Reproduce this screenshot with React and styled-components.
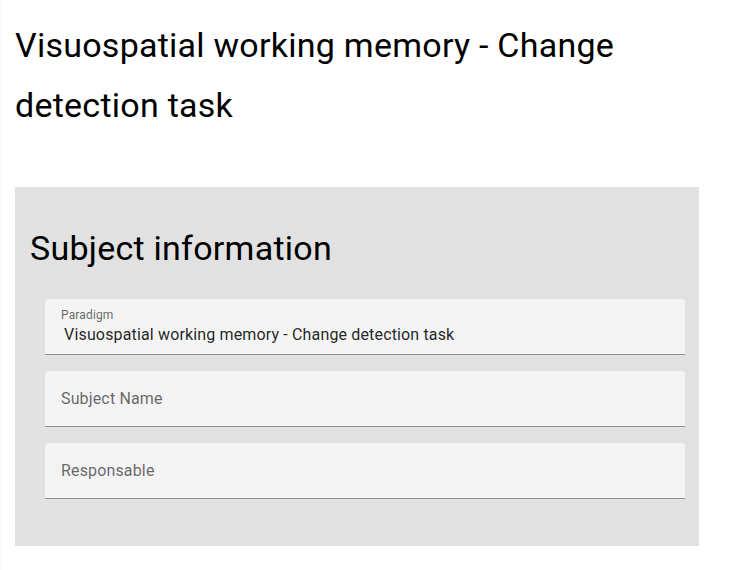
import React from "react";
import styled, { createGlobalStyle } from "styled-components";

const GlobalStyle = createGlobalStyle`
  body {
    margin: 0;
    background: #fff;
    font-family: Roboto, "Helvetica", "Arial", sans-serif;
  }
`;

const fields = [
  {
    label: "Paradigm",
    value: " Visuospatial working memory - Change detection task",
  },
  { label: "Subject Name" },
  { label: "Responsable" },
];

export default function App() {
  return (
    <>
      <GlobalStyle />
      <Page>
        <Title>Visuospatial working memory - Change detection task</Title>
        <Panel>
          <PanelHeading>Subject information</PanelHeading>
          <Form>
            {fields.map((f) => (
              <Field key={f.label}>
                {f.value ? (
                  <>
                    <SmallLabel>{f.label}</SmallLabel>
                    <Value>{f.value}</Value>
                  </>
                ) : (
                  <Placeholder>{f.label}</Placeholder>
                )}
              </Field>
            ))}
          </Form>
        </Panel>
      </Page>
    </>
  );
}

const Page = styled.div`
  margin-left: 1px;
  border-left: 1px solid #f5f5f5;
  padding: 15px 30px 25px 13px;
  min-height: 530px;
`;

const Title = styled.h1`
  margin: 0;
  width: 640px;
  font-size: 34px;
  font-weight: 400;
  line-height: 60px;
  letter-spacing: 0.25px;
  color: #000;
`;

const Panel = styled.div`
  margin-top: 52px;
  width: 684px;
  box-sizing: border-box;
  background: #e1e1e1;
  padding: 31px 14px 47px 15px;
`;

const PanelHeading = styled.h2`
  margin: 0;
  font-size: 34px;
  font-weight: 400;
  line-height: 60px;
  letter-spacing: 0.25px;
  color: #000;
`;

const Form = styled.div`
  display: flex;
  flex-direction: column;
  gap: 16px;
  margin: 21px 0 0 15px;
`;

const Field = styled.div`
  height: 56px;
  box-sizing: border-box;
  background: #f4f4f4;
  border-radius: 4px 4px 0 0;
  border-bottom: 1px solid #8f8f8f;
  padding: 0 16px;
  display: flex;
  flex-direction: column;
  justify-content: center;
  letter-spacing: 0.15px;
`;

const SmallLabel = styled.div`
  font-size: 12px;
  line-height: 14px;
  color: rgba(0, 0, 0, 0.6);
  margin-top: -2px;
`;

const Value = styled.div`
  font-size: 16px;
  line-height: 19px;
  color: rgba(0, 0, 0, 0.87);
  white-space: pre;
  margin-top: 3px;
  margin-left: -1px;
`;

const Placeholder = styled.div`
  font-size: 16px;
  line-height: 19px;
  color: rgba(0, 0, 0, 0.6);
  margin-top: -1px;
`;
